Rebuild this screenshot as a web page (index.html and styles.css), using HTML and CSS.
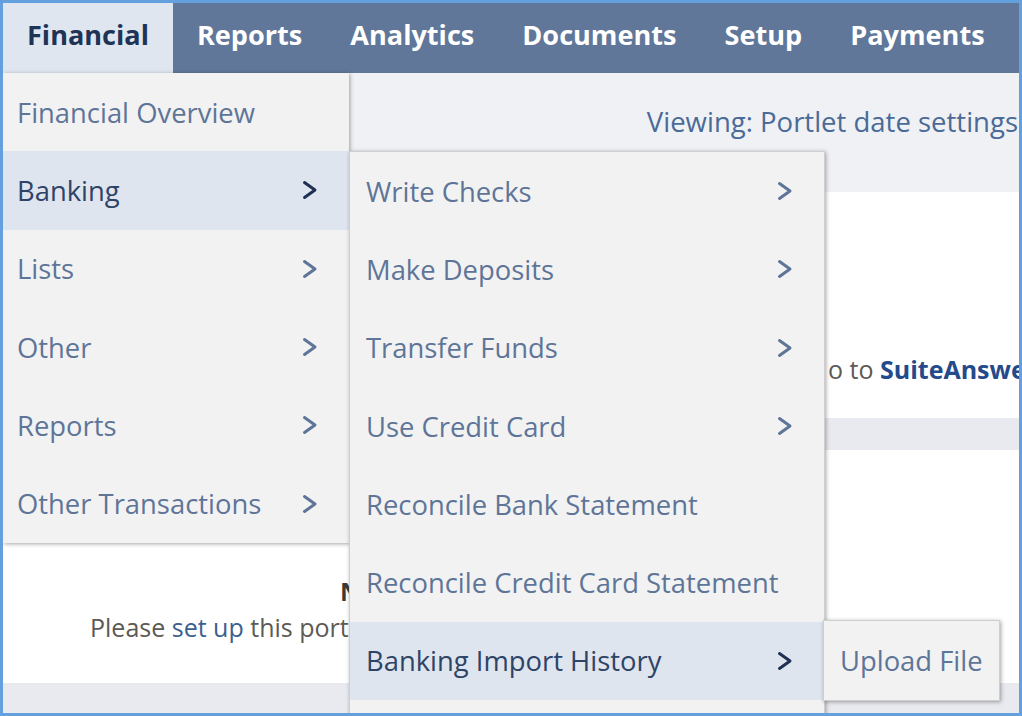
FILE: index.html
```html
<!DOCTYPE html>
<html>
<head>
<meta charset="utf-8">
<link rel="stylesheet" href="styles.css">
</head>
<body>
<div class="frame">
  <nav class="nav">
    <div class="tab active">Financial</div>
    <div class="tab">Reports</div>
    <div class="tab">Analytics</div>
    <div class="tab">Documents</div>
    <div class="tab">Setup</div>
    <div class="tab">Payments</div>
  </nav>
  <main class="content">
    <div class="viewing-row">Viewing: Portlet date settings</div>
    <section class="portlet portlet-a">
      <p class="help">o to <b>SuiteAnswers</b></p>
    </section>
    <div class="gap"></div>
    <section class="portlet portlet-b">
      <p class="empty-title">No Data</p>
      <p class="empty-text">Please <span class="link">set up</span> this portlet</p>
    </section>
    <div class="gap"></div>
  </main>

  <ul class="menu menu-1">
    <li class="item">Financial Overview</li>
    <li class="item hover">Banking<svg class="chev" viewBox="0 0 16 20"><path d="M2.5 2.5 L13 10 L2.5 17.5"/></svg></li>
    <li class="item">Lists<svg class="chev" viewBox="0 0 16 20"><path d="M2.5 2.5 L13 10 L2.5 17.5"/></svg></li>
    <li class="item">Other<svg class="chev" viewBox="0 0 16 20"><path d="M2.5 2.5 L13 10 L2.5 17.5"/></svg></li>
    <li class="item">Reports<svg class="chev" viewBox="0 0 16 20"><path d="M2.5 2.5 L13 10 L2.5 17.5"/></svg></li>
    <li class="item">Other Transactions<svg class="chev" viewBox="0 0 16 20"><path d="M2.5 2.5 L13 10 L2.5 17.5"/></svg></li>
  </ul>

  <ul class="menu menu-2">
    <li class="item">Write Checks<svg class="chev" viewBox="0 0 16 20"><path d="M2.5 2.5 L13 10 L2.5 17.5"/></svg></li>
    <li class="item">Make Deposits<svg class="chev" viewBox="0 0 16 20"><path d="M2.5 2.5 L13 10 L2.5 17.5"/></svg></li>
    <li class="item">Transfer Funds<svg class="chev" viewBox="0 0 16 20"><path d="M2.5 2.5 L13 10 L2.5 17.5"/></svg></li>
    <li class="item">Use Credit Card<svg class="chev" viewBox="0 0 16 20"><path d="M2.5 2.5 L13 10 L2.5 17.5"/></svg></li>
    <li class="item">Reconcile Bank Statement</li>
    <li class="item">Reconcile Credit Card Statement</li>
    <li class="item hover">Banking Import History<svg class="chev" viewBox="0 0 16 20"><path d="M2.5 2.5 L13 10 L2.5 17.5"/></svg></li>
    <li class="item">Import Online Banking File</li>
  </ul>

  <ul class="menu menu-3">
    <li class="item">Upload File</li>
  </ul>
</div>
</body>
</html>
```

FILE: styles.css
```css
* { box-sizing: border-box; }
html, body { margin: 0; padding: 0; }
body {
  width: 1022px;
  height: 716px;
  overflow: hidden;
  font-family: "Open Sans", "Liberation Sans", sans-serif;
  background: #ffffff;
}
.frame {
  position: relative;
  width: 1022px;
  height: 716px;
  border: 3px solid #64a0dd;
  overflow: hidden;
  display: flex;
  flex-direction: column;
  background: #eff1f5;
}
.nav {
  display: flex;
  height: 70px;
  background: #607799;
  flex-shrink: 0;
}
.tab {
  padding: 0 24px 7px;
  display: flex;
  align-items: center;
  color: #ffffff;
  font-weight: 700;
  font-size: 27.1px;
}
.tab.active {
  background: #e0e6ef;
  color: #1e3457;
}
.content {
  flex: 1;
  display: flex;
  flex-direction: column;
}
.viewing-row {
  height: 119px;
  flex-shrink: 0;
  display: flex;
  justify-content: flex-end;
  align-items: flex-start;
  padding-top: 30px;
  white-space: nowrap;
  color: #4a6a97;
  font-size: 27.5px;
  margin-right: 1px;
}
.portlet {
  background: #ffffff;
  flex-shrink: 0;
  position: relative;
}
.portlet-a { height: 226px; }
.portlet-b { height: 233px; }
.gap { height: 32px; flex-shrink: 0; background: #e8eaef; }
.help {
  margin: 0;
  padding: 160px 0 0 825px;
  white-space: nowrap;
  font-size: 25px;
  color: #5d5a55;
}
.help b { color: #244a8c; }
.empty-title {
  margin: 0;
  padding: 124px 0 0 337px;
  font-size: 25px;
  font-weight: 700;
  color: #3a3a3a;
  white-space: nowrap;
}
.empty-text {
  margin: 0;
  padding: 2px 0 0 87px;
  font-size: 25px;
  color: #5d5a55;
  white-space: nowrap;
}
.link { color: #3d5f8f; }

.menu {
  position: absolute;
  list-style: none;
  margin: 0;
  padding: 0;
  background: #f2f2f2;
  box-shadow: 1px 1px 4px rgba(0,0,0,0.35);
}
.item {
  height: 78.3px;
  display: flex;
  align-items: center;
  justify-content: space-between;
  font-size: 27.4px;
  color: #5e7598;
  white-space: nowrap;
}
.item.hover {
  background: #dfe5ef;
  color: #2e4466;
}
.chev {
  width: 16px;
  height: 20px;
  fill: none;
  stroke: currentColor;
  stroke-width: 3;
  stroke-linecap: round;
  stroke-linejoin: round;
  flex-shrink: 0;
}
.item.hover .chev { stroke: #1f3152; }

.menu-1 {
  left: 0;
  top: 70px;
  width: 346px;
}
.menu-1 .item { padding: 0 31px 0 14px; }

.menu-2 {
  left: 346px;
  top: 148px;
  width: 476px;
  border: 1px solid #cfcfcf;
}
.menu-2 .item { padding: 0 31px 0 16px; }

.menu-3 {
  left: 820px;
  top: 617px;
  width: 177px;
  border: 1px solid #cfcfcf;
}
.menu-3 .item { height: 79px; padding: 0 16px; }
```
